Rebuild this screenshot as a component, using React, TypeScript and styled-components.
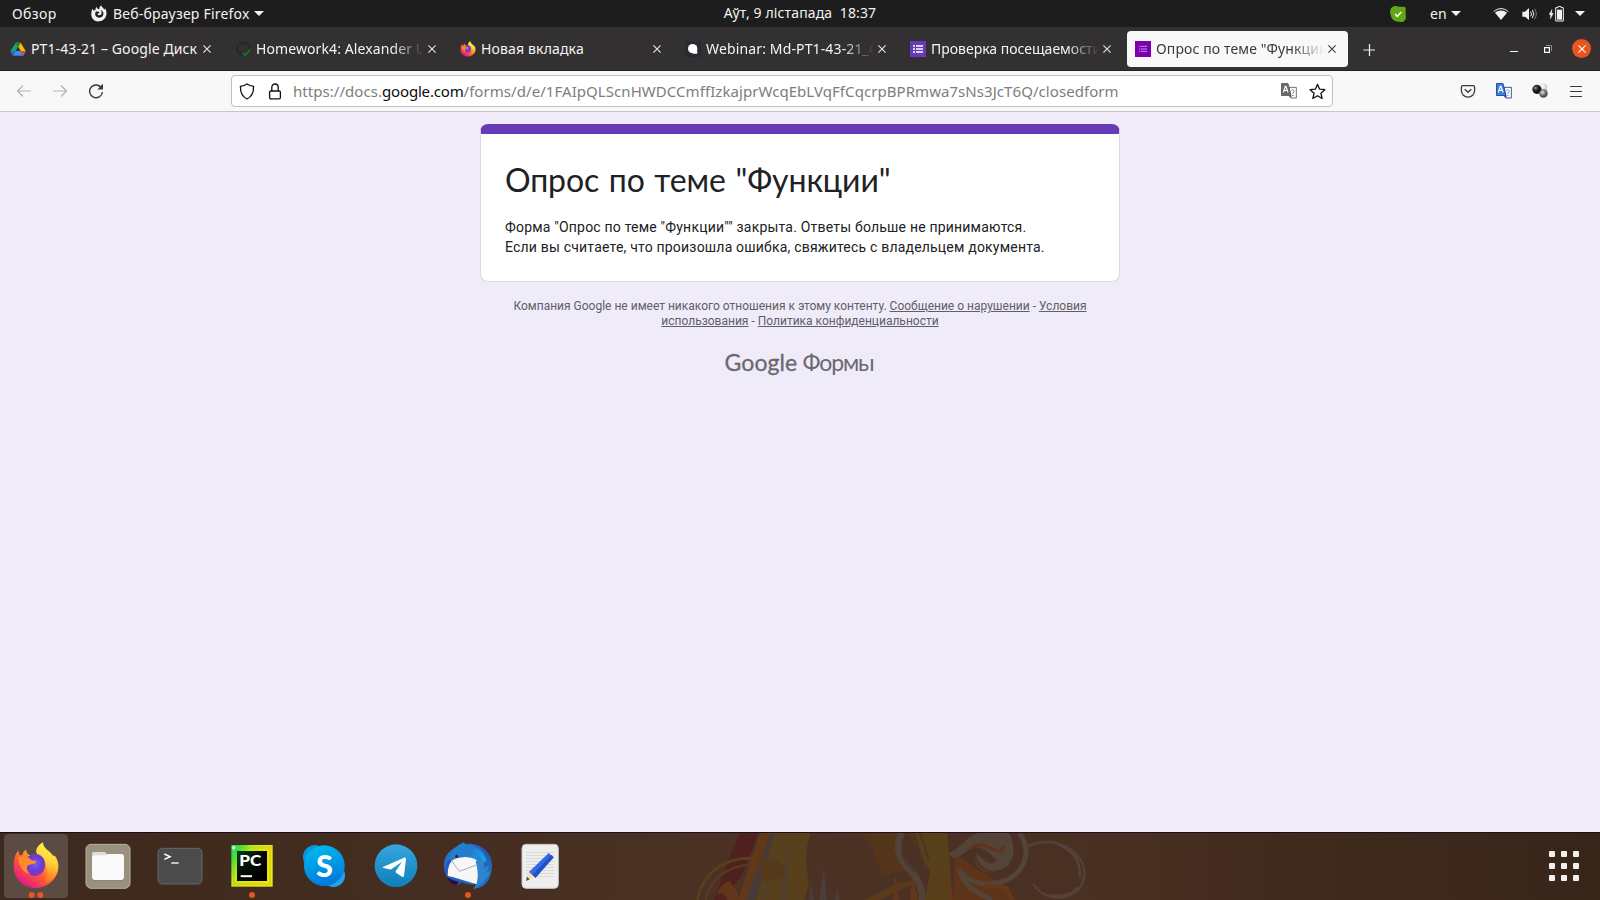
import React from 'react';
import styled, { createGlobalStyle } from 'styled-components';

const GlobalStyle = createGlobalStyle`
  * { box-sizing: border-box; }
  body { margin: 0; background: #efebf8; }
  svg { display: block; flex: none; }
`;

const uiFont = '"Noto Sans", "Open Sans", sans-serif';

const Desktop = styled.div`
  width: 1600px;
  height: 900px;
  display: flex;
  flex-direction: column;
  overflow: hidden;
  font-family: ${uiFont};
`;

/* ---------- system bar ---------- */

const SystemBar = styled.header`
  height: 27px;
  flex: none;
  display: grid;
  grid-template-columns: 1fr auto 1fr;
  align-items: center;
  background: #1d1d1d;
  color: #f2f2f2;
  font-size: 14px;
  line-height: 27px;
`;

const BarGroup = styled.div<{ $end?: boolean }>`
  display: flex;
  align-items: center;
  height: 27px;
  justify-content: ${(p) => (p.$end ? 'flex-end' : 'flex-start')};
  padding: ${(p) => (p.$end ? '0 15px 0 0' : '0 0 0 12px')};
`;

const BarLabel = styled.span<{ $track?: number; $width?: number }>`
  white-space: pre;
  letter-spacing: ${(p) => p.$track ?? 0}px;
  width: ${(p) => (p.$width ? `${p.$width}px` : 'auto')};
`;

const Gap = styled.span<{ $w: number }>`
  width: ${(p) => p.$w}px;
  flex: none;
`;

const Clock = styled(BarLabel)`
  height: 27px;
  line-height: 25px;
`;

/* ---------- tab strip ---------- */

const TabStrip = styled.nav`
  height: 44px;
  flex: none;
  display: flex;
  align-items: center;
  gap: 4px;
  padding: 0 9px 0 2px;
  background: #333031;
  border-bottom: 1px solid #211f20;
`;

const Tab = styled.div<{ $active?: boolean }>`
  width: 221px;
  height: 36px;
  display: flex;
  align-items: center;
  padding-left: 8px;
  border-radius: 4px;
  color: ${(p) => (p.$active ? '#3a3a3a' : '#f4f4f4')};
  background: ${(p) => (p.$active ? '#f8f8f8' : 'transparent')};
`;

const TabTitle = styled.span<{ $fade?: boolean; $track: number }>`
  width: 168px;
  margin-left: 5px;
  overflow: hidden;
  white-space: nowrap;
  font-size: 14px;
  line-height: 36px;
  padding-top: 1px;
  letter-spacing: ${(p) => p.$track}px;
  mask-image: ${(p) => (p.$fade ? 'linear-gradient(to left, transparent, #000 32px)' : 'none')};
`;

const TabClose = styled.span`
  width: 16px;
  display: flex;
  justify-content: center;
`;

const WindowControls = styled.div`
  margin-left: auto;
  display: flex;
  align-items: center;
`;

const CloseWindow = styled.span`
  width: 19px;
  height: 19px;
  border-radius: 50%;
  background: #e95420;
  display: grid;
  place-items: center;
`;

/* ---------- toolbar ---------- */

const Toolbar = styled.div`
  height: 41px;
  flex: none;
  display: flex;
  align-items: center;
  padding: 0 16px;
  background: #f8f8f8;
  border-bottom: 1px solid #c7c7c9;
`;

const NavButtons = styled.div`
  width: 215px;
  display: flex;
  align-items: center;
  gap: 20px;
`;

const AddressField = styled.div`
  width: 1102px;
  height: 32px;
  display: flex;
  align-items: center;
  gap: 12px;
  padding: 0 6px 0 7px;
  background: #fff;
  border: 1px solid #bfbfc1;
  border-radius: 4px;
`;

const Url = styled.span`
  flex: 1;
  display: flex;
  margin-left: -2px;
  font-size: 15px;
  line-height: 30px;
  color: #7d7d7d;
  white-space: nowrap;
`;

const UrlPart = styled.span<{ $strong?: boolean; $track: number }>`
  color: ${(p) => (p.$strong ? '#0c0c0d' : 'inherit')};
  letter-spacing: ${(p) => p.$track}px;
`;

const ToolbarActions = styled.div`
  margin-left: auto;
  display: flex;
  align-items: center;
  gap: 20px;
`;

/* ---------- page ---------- */

const Page = styled.main`
  flex: 1;
  display: flex;
  flex-direction: column;
  align-items: center;
  padding-top: 12px;
  background: #efebf8;
  font-family: Roboto, sans-serif;
`;

const FormCard = styled.section`
  width: 640px;
  height: 158px;
  border: 1px solid #dadce0;
  border-top: 10px solid #673ab7;
  border-radius: 8px;
  background: #fff;
  padding: 26px 24px 0;
  background-clip: padding-box;
`;

const FormTitle = styled.h1`
  margin: 0;
  font: 400 32px/40px Lato, sans-serif;
  letter-spacing: -0.1px;
  word-spacing: 1.5px;
  color: #202124;
`;

const FormText = styled.p`
  margin: 17px 0 0;
  font-size: 14px;
  line-height: 20px;
  letter-spacing: 0.2px;
  color: #202124;
`;

const Disclaimer = styled.p`
  width: 592px;
  margin: 17px 0 0;
  text-align: center;
  font-size: 12px;
  line-height: 15px;
  color: #615e66;
`;

const PolicyLink = styled.a`
  color: inherit;
  text-decoration: underline;
`;

const Brand = styled.div`
  margin-top: 17px;
  display: flex;
  gap: 5px;
  font: 400 23px/32px Lato, sans-serif;
  color: #6b6870;
`;

const BrandWord = styled.span<{ $w: number; $track: number; $bold?: boolean }>`
  width: ${(p) => p.$w}px;
  letter-spacing: ${(p) => p.$track}px;
  -webkit-text-stroke: ${(p) => (p.$bold ? '0.3px' : '0')} currentColor;
`;

/* ---------- dock ---------- */

const Dock = styled.footer`
  position: relative;
  height: 68px;
  flex: none;
  display: flex;
  align-items: center;
  gap: 8px;
  padding: 0 21px 1px 4px;
  border-top: 1px solid #1b1019;
  background: linear-gradient(90deg, #3e291e 0, #452e21 30%, #4b3224 47%, #4a3023 68%, #3f2a1d 82%, #38251a 100%);
`;

const Wallpaper = styled.svg`
  position: absolute;
  left: 680px;
  top: 0;
  opacity: 0.9;
`;

const DockItem = styled.div<{ $active?: boolean }>`
  position: relative;
  width: 64px;
  height: 64px;
  border-radius: 4px;
  background: ${(p) => (p.$active ? '#5c4b42' : 'transparent')};
`;

const AppGrid = styled.div`
  position: relative;
  margin-left: auto;
  display: grid;
  grid-template-columns: repeat(3, 6px);
  grid-auto-rows: 6px;
  gap: 6px;
`;

const GridDot = styled.i`
  background: #f1f0ee;
  border-radius: 1px;
`;

/* ---------- small icons ---------- */

const Caret = ({ w = 10 }: { w?: number }) => (
  <svg width={w} height="5" viewBox="0 0 10 5" preserveAspectRatio="none"><path d="M0 0h10L5 5z" fill="#f2f2f2" /></svg>
);

const Cross = ({ color = '#e6e6e6', size = 8 }: { color?: string; size?: number }) => (
  <svg width={size} height={size} viewBox="0 0 8 8"><path d="M.4.4l7.2 7.2M7.6.4L.4 7.6" stroke={color} strokeWidth="1.1" fill="none" /></svg>
);

const FirefoxMono = () => (
  <svg width="16" height="17" viewBox="0 0 48 51">
    <path d="M4 12c2-1 3 3 4 5l6-3c-1-5 1-7 3-8 0 4 3 6 8 7-1-5 2-9 6-12 0 6 7 8 9 13 2-1 2-3 2-4 9 13 5 38-18 39C3 51-4 29 4 12z" fill="#f2f2f2" />
    <path d="M14 20c5-1 8 0 12 2-1 4-5 2-7 5 2 6 12 5 13-2 1-5-2-8-4-10 9 2 12 11 7 18-6 8-18 6-22-2-1-4 0-8 1-11z" fill="#1d1d1d" />
  </svg>
);

const DriveIcon = () => (
  <svg width="16" height="16" viewBox="0 0 48 48">
    <path d="M17 5h15l15 25H32z" fill="#fbbc04" />
    <path d="M17 5L1 31l8 13 16-26z" fill="#1ea362" />
    <path d="M17 5h15l-7 13z" fill="#188038" />
    <path d="M16 30h31l-7 14H9z" fill="#4285f4" />
    <path d="M32 30h15l-7 14z" fill="#ea4335" />
    <path d="M1 31l8 13 8-14z" fill="#2468d6" />
    <path d="M24 18l7 12H17z" fill="#333031" />
  </svg>
);

const GithubCheck = () => (
  <svg width="16" height="16" viewBox="0 0 48 48">
    <path d="M46 20A22 22 0 1 0 19 45v-8c-5 1-8-1-10-5 4 2 8 3 11 0-9-1-12-8-9-16v-7l7 3c4-1 9-1 13 0l6-3 1 8c2 3 2 8 0 11z" fill="#222b30" />
    <path d="M24 36l7 7 14-17" stroke="#0f7b25" strokeWidth="4.5" fill="none" />
  </svg>
);

const WebinarIcon = () => (
  <svg width="16" height="16" viewBox="0 0 48 48">
    <rect width="48" height="48" fill="#262a33" />
    <circle cx="23" cy="23" r="14" fill="#fff" />
    <path d="M27 29h10v9H24z" fill="#fff" />
  </svg>
);

const FormsIcon = ({ bg, soft }: { bg: string; soft?: boolean }) => (
  <svg width="16" height="16" viewBox="0 0 48 48">
    <rect width="48" height="48" fill={bg} />
    {soft ? (
      <path d="M12 16h4m2 0h18M12 24h4m2 0h18M12 31h4m2 0h18" stroke="#c98be4" strokeWidth="3" />
    ) : (
      <path d="M9 15h6m3 0h21M9 24h6m3 0h21M9 33h6m3 0h21" stroke="#fff" strokeWidth="5" />
    )}
  </svg>
);

/* Shared by the dock launcher and the new-tab favicon */
const FirefoxShape = ({ id }: { id: string }) => (
  <>
    <defs>
      <linearGradient id={`${id}a`} x1=".85" y1=".05" x2=".2" y2=".95">
        <stop offset="0" stopColor="#fff44f" /><stop offset=".35" stopColor="#ffb02a" /><stop offset=".62" stopColor="#ff5a35" /><stop offset="1" stopColor="#e31587" />
      </linearGradient>
      <linearGradient id={`${id}b`} x1=".7" y1="0" x2=".5" y2="1">
        <stop offset="0" stopColor="#fff44f" /><stop offset=".45" stopColor="#ffd53a" /><stop offset=".8" stopColor="#ff8a25" /><stop offset="1" stopColor="#ff5a35" />
      </linearGradient>
      <radialGradient id={`${id}c`} cx=".5" cy=".45" r=".6">
        <stop offset="0" stopColor="#7a5cf5" /><stop offset=".6" stopColor="#6a3bd0" /><stop offset="1" stopColor="#9a2fae" />
      </radialGradient>
    </defs>
    <path d="M33 66c2-7 6-13 11-16l2 14 9-1c1-8 5-13 12-16-1 8 3 14 14 17l22-5c-2-14 4-25 14-34 0 20 22 25 31 42l5-2c7 10 12 23 10 37-3 35-34 60-68 60-38 0-66-29-66-63 0-12 1-22 4-33z" fill={`url(#${id}a)`} />
    <path d="M97 56c-2-13 6-22 19-31 0 20 19 24 29 42l4-3c14 23 15 53-4 72-12 12-28 16-42 15 22-8 31-28 26-46-2-17-14-30-32-49z" fill={`url(#${id}b)`} />
    <path d="M74 67c13-11 38-9 46 9 10 22-1 48-25 50-21 1-35-15-32-33 2-12 4-20 11-26z" fill={`url(#${id}c)`} />
    <path d="M42 70c18-3 32-3 40 9l16 2c-4 12-18 8-26 13-7 7-2 19 7 27-22-4-36-27-37-51z" fill="#ff8a2c" />
  </>
);

const FirefoxSmall = () => (
  <svg width="16" height="16" viewBox="24 22 144 144"><FirefoxShape id="fs" /></svg>
);

const Back = ({ flip }: { flip?: boolean }) => (
  <svg width="16" height="16" viewBox="0 0 16 16">
    <path d={flip ? 'M1 8h13.4M9 2.5L14.5 8 9 13.5' : 'M15 8H1.6M7 2.5L1.5 8 7 13.5'} fill="none" stroke="#b2b2b2" strokeWidth="1.2" />
  </svg>
);

const Reload = () => (
  <svg width="16" height="16" viewBox="0 0 16 16">
    <path d="M13.6 5.2A6.4 6.4 0 1 0 14.4 9" fill="none" stroke="#3a3a3a" strokeWidth="1.4" />
    <path d="M15 .8v5.7H9.3z" fill="#3a3a3a" />
  </svg>
);

const Shield = () => (
  <svg width="16" height="17" viewBox="0 0 16 17">
    <path d="M8 1c2 1.5 4 2 6.6 2.4.1 6-1.6 10-6.6 12.6C3 13.4 1.300 9.400 1.400 3.400 4 3 6 2.500 8 1z" fill="none" stroke="#111" strokeWidth="1.3" strokeLinejoin="round" />
  </svg>
);

const Lock = () => (
  <svg width="16" height="17" viewBox="0 0 16 17">
    <rect x="2.6" y="8" width="10.8" height="7.8" rx="1.3" fill="none" stroke="#111" strokeWidth="1.3" />
    <path d="M4.8 8V4.200a3.200 3.200 0 0 1 6.400 0V8" fill="none" stroke="#111" strokeWidth="1.3" />
  </svg>
);

const Translate = ({ color, edge, back }: { color: string; edge: string; back: string }) => (
  <svg width="16" height="16" viewBox="0 0 48 48">
    <path d="M24 13h22v32H30z" fill="#fff" stroke={edge} strokeWidth="2.5" />
    <path d="M31 22c5-3 9 0 8 4-1 3-4 4-4 7M33 38h5" stroke={back} strokeWidth="3" fill="none" />
    <path d="M1.5 1.5H21l9 36H1.5z" fill={color} stroke={edge} strokeWidth="2.5" />
    <path d="M23 38h8l-2 8z" fill={edge} />
    <path d="M7 28l6-18h2l6 18M9 22h10" stroke="#fff" strokeWidth="3.5" fill="none" />
  </svg>
);

const Star = () => (
  <svg width="17" height="17" viewBox="0 0 17 17">
    <path d="M8.5 1.3l2.1 4.9 5.3.5-4 3.5 1.2 5.3-4.6-2.8-4.6 2.8 1.2-5.3-4-3.5 5.3-.5z" fill="none" stroke="#111" strokeWidth="1.3" strokeLinejoin="round" />
  </svg>
);

const Pocket = () => (
  <svg width="16" height="16" viewBox="0 0 16 16">
    <path d="M3 2.600h10a1.600 1.600 0 0 1 1.600 1.600v3.300a6.600 6.600 0 0 1-13.200 0V4.200A1.600 1.600 0 0 1 3 2.600z" fill="none" stroke="#3a3a3a" strokeWidth="1.3" />
    <path d="M4.700 6.200L8 9.300l3.300-3.100" fill="none" stroke="#3a3a3a" strokeWidth="1.3" />
  </svg>
);

const Molecule = () => (
  <svg width="16" height="16" viewBox="0 0 49 48">
    <defs>
      <radialGradient id="mk" cx=".35" cy=".35"><stop offset="0" stopColor="#bbb" /><stop offset=".3" stopColor="#444" /><stop offset="1" stopColor="#0b0b0b" /></radialGradient>
      <radialGradient id="mg" cx=".4" cy=".35"><stop offset="0" stopColor="#e4e4e4" /><stop offset=".5" stopColor="#8f8f8f" /><stop offset="1" stopColor="#4f4f4f" /></radialGradient>
      <radialGradient id="mw" cx=".4" cy=".35"><stop offset="0" stopColor="#fff" /><stop offset="1" stopColor="#ccc" /></radialGradient>
    </defs>
    <circle cx="35" cy="13" r="12" fill="url(#mw)" />
    <circle cx="15" cy="19" r="14" fill="url(#mk)" />
    <circle cx="35" cy="32" r="13" fill="url(#mg)" />
  </svg>
);

const Menu = () => (
  <svg width="16" height="16" viewBox="0 0 16 16"><path d="M2 3.500h12M2 8.500h12M2 13.500h12" stroke="#3a3a3a" strokeWidth="1.2" /></svg>
);

const SkypeTray = () => (
  <svg width="16" height="16" viewBox="0 0 48 48">
    <path d="M12 1c8-2 9 1 15 1h15q5 0 5 5v18c0 5 2 8 0 13-3 9-11 12-19 9C12 48 3 39 2 25-2 15 1 4 12 1z" fill="#5fa716" />
    <path d="M15 24l7 7 12-13" stroke="#fff" strokeWidth="4.5" fill="none" />
  </svg>
);

const Wifi = () => (
  <svg width="16" height="14" viewBox="0 0 48 42">
    <path d="M2 14C15 2 33 2 46 14" fill="none" stroke="#f2f2f2" strokeWidth="3" />
    <path d="M6 17c10-9 26-9 36 0L24 39z" fill="#f2f2f2" />
  </svg>
);

const Volume = () => (
  <svg width="15" height="14" viewBox="0 0 45 42">
    <path d="M1 14h8L21 3v36L9 29H1z" fill="#f2f2f2" />
    <path d="M26 14q5 7 0 14M31 9q9 12 0 24" fill="none" stroke="#f2f2f2" strokeWidth="3" />
    <path d="M37 5q12 16 0 32" fill="none" stroke="#8b8b8b" strokeWidth="2.5" />
  </svg>
);

const Battery = () => (
  <svg width="15" height="16" viewBox="0 0 45 48">
    <path d="M9 10L0 26h5l-1 13 9-17H8z" fill="#f2f2f2" stroke="#f2f2f2" strokeWidth="1" />
    <path d="M20 5h7V1h9v4h7v40H20z" fill="none" stroke="#f2f2f2" strokeWidth="3" />
    <path d="M24 11h15v30H24z" fill="#f2f2f2" />
  </svg>
);

const Minimise = () => (
  <svg width="8" height="14" viewBox="0 0 8 14"><path d="M0 9.500h8" stroke="#f2f2f2" /></svg>
);

const Restore = () => (
  <svg width="8" height="8" viewBox="0 0 8 8">
    <path d="M2 .5h5.500V6" fill="none" stroke="#8d8b8c" />
    <path d="M.6 2.600h4.800v4.800H.6z" fill="none" stroke="#fff" strokeWidth="1.2" />
  </svg>
);

const Plus = () => (
  <svg width="12" height="14" viewBox="0 0 12 14"><path d="M6.500 2v12M.5 8h12" stroke="#f2f2f2" strokeWidth="1.2" /></svg>
);

/* ---------- dock icons ---------- */

const Launcher = ({ children, dots = 0, active }: { children: React.ReactNode; dots?: number; active?: boolean }) => (
  <DockItem $active={active}>
    <svg width="64" height="64" viewBox="0 0 192 192">
      {children}
      {dots === 1 && <circle cx="96" cy="183" r="9" fill="#e95420" />}
      {dots === 2 && <><circle cx="83" cy="183" r="9" fill="#e95420" /><circle cx="109" cy="183" r="9" fill="#e95420" /></>}
    </svg>
  </DockItem>
);

const FilesArt = () => (
  <>
    <rect x="30" y="31" width="132" height="132" rx="15" fill="#999080" stroke="#b9b1a2" strokeWidth="3" />
    <path d="M48 62q0-8 8-8h26q6 0 8 4l4 6h42q8 0 8 8v20H48z" fill="#e0dcd2" />
    <rect x="48" y="66" width="96" height="75" rx="8" fill="#7d7565" opacity=".4" />
    <path d="M48 72q0-9 9-9h31q4 0 7-3h41q8 0 8 9v60q0 9-9 9H57q-9 0-9-9z" fill="#fafafa" />
    <path d="M48 72v-10q0-8 8-8h26q6 0 8 4l4 4q-3 2-6 2H57q-8 0-9 8z" fill="#e0dcd2" />
  </>
);

const TerminalArt = () => (
  <>
    <rect x="30" y="43" width="132" height="107" rx="13" fill="#4b4b4b" stroke="#6a6764" strokeWidth="3" />
    <path d="M49 60l17 8-17 8" fill="none" stroke="#fff" strokeWidth="4.5" />
    <path d="M70 87h22" stroke="#fff" strokeWidth="4" />
  </>
);

const PyCharmArt = () => (
  <>
    <defs>
      <linearGradient id="pc" x1="0" y1="0" x2="1" y2=".6"><stop offset="0" stopColor="#21d789" /><stop offset=".15" stopColor="#1fe04a" /><stop offset=".4" stopColor="#c6e81d" /><stop offset=".75" stopColor="#f0e010" /><stop offset="1" stopColor="#e9e81a" /></linearGradient>
      <linearGradient id="pk" x1="0" y1="0" x2="1" y2="1"><stop offset="0" stopColor="#0a3a16" /><stop offset=".5" stopColor="#020803" /><stop offset="1" stopColor="#000" /></linearGradient>
    </defs>
    <rect x="34" y="33" width="124" height="125" fill="url(#pc)" />
    <rect x="42" y="41" width="108" height="109" fill="none" stroke="#b9c400" strokeOpacity=".35" strokeWidth="6" />
    <circle cx="41" cy="41" r="6" fill="#c9ffd9" opacity=".8" />
    <rect x="51" y="51" width="90" height="90" fill="url(#pk)" />
    <text x="58" y="96" textLength="66" lengthAdjust="spacingAndGlyphs" fontFamily="Lato, sans-serif" fontSize="46" fontWeight="900" fill="#fff">PC</text>
    <path d="M62 126.500h34" stroke="#fff" strokeWidth="6" />
  </>
);

const SkypeArt = () => (
  <>
    <defs>
      <linearGradient id="sk" x1=".3" y1="0" x2=".6" y2="1"><stop offset="0" stopColor="#00b9f0" /><stop offset="1" stopColor="#0078d8" /></linearGradient>
    </defs>
    <circle cx="69" cy="69" r="36" fill="#0a96dc" />
    <circle cx="124" cy="124" r="35" fill="#22a6e6" />
    <circle cx="97" cy="95" r="61" fill="url(#sk)" />
    <text x="97" y="128" textAnchor="middle" fontFamily="Lato, sans-serif" fontSize="92" fontWeight="900" fill="#fff">S</text>
  </>
);

const TelegramArt = () => (
  <>
    <defs>
      <linearGradient id="tg" x1="0" y1="0" x2="0" y2="1"><stop offset="0" stopColor="#35a6de" /><stop offset="1" stopColor="#0e7fbb" /></linearGradient>
    </defs>
    <circle cx="96" cy="95" r="64" fill="url(#tg)" />
    <path d="M57 99l63-28q6-2 6 4l-6 50q-1 6-6 3l-18-12q-3-3 0-6l18-27-31 22q-3 2-7 1l-17-4q-5-1-2-3z" fill="#fff" />
  </>
);

const ThunderbirdArt = () => (
  <>
    <defs>
      <linearGradient id="tb" x1="0" y1="0" x2="1" y2="1"><stop offset="0" stopColor="#2a7fd6" /><stop offset=".5" stopColor="#2359bb" /><stop offset="1" stopColor="#2277bd" /></linearGradient>
      <linearGradient id="th" x1="0" y1="0" x2="1" y2=".6"><stop offset="0" stopColor="#1e86c9" /><stop offset=".6" stopColor="#257bd0" /><stop offset="1" stopColor="#1b9fe0" /></linearGradient>
    </defs>
    <path d="M96 29c38-2 72 26 72 66 0 28-12 50-30 63l-28 8 10-12-26-4-32 4-8-7-10-5c-14-14-20-28-20-47 0-37 32-64 72-66z" fill="url(#tb)" />
    <path d="M33 128c10 8 22 12 36 15l-7 11C47 150 38 142 33 128z" fill="#251052" />
    <path d="M60 160l16-15 30 10 16-8-14 18z" fill="#452e21" />
    <path d="M58 72q30-6 62 0l14 22-2 42-10 15-72-22q-10-2-15-4-1-23 6-37z" fill="#f7f7f8" />
    <path d="M45 75q6 14 26 37l50-19" fill="none" stroke="#a9a9ad" strokeWidth="3" />
    <path d="M40 76c6-25 22-44 46-52-3 7 3 7 10 9 30 2 50 20 56 48l-22 10c-4-16-30-27-63-20-10 4-18 7-27 5z" fill="url(#th)" />
    <path d="M119 83c8-4 6-14 0-20 20 8 28 20 26 40l14-10-6 22 10-5c-8 24-24 40-48 54 14-24 12-54 4-81z" fill="#2b86cf" />
    <circle cx="62" cy="67" r="4.5" fill="#3a1d1a" />
    <path d="M40 76l12 4-8 6z" fill="#d9d9de" />
    <path d="M28 112c0-20 4-30 14-38l6 6c-10 10-12 26-14 44z" fill="#2a56c2" />
  </>
);

const EditorArt = () => (
  <>
    <rect x="42" y="31" width="109" height="132" rx="12" fill="#eeeeee" stroke="#c9c7c4" strokeWidth="3" />
    <path d="M54 55.500h84M54 64.500h84M54 73.500h84M54 82.500h84M54 91.500h84M54 100.500h84M54 109.500h84M54 118.500h84M54 127.500h84" stroke="#cfcfcf" strokeWidth="2" />
    <path d="M122 57l15 13-55 62-20-17z" fill="#3468e4" />
    <path d="M130 63l7 7-55 62-9-8z" fill="#2450c4" />
    <path d="M62 113l20 18-27 9z" fill="#f9dcbd" />
    <path d="M57 128l8 8-11 5z" fill="#43474d" />
  </>
);

const WallpaperArt = () => (
  <Wallpaper width="430" height="67" viewBox="0 24 1290 201" preserveAspectRatio="none">
    <path d="M178 24h58l-52 130-60 71h-22l45-125z" fill="#50201e" />
    <path d="M240 24h38L212 225h-38z" fill="#653819" />
    <path d="M272 24h16L228 225h-32z" fill="#483b37" />
    <path d="M286 24h106c-20 60-14 100-6 150l-12 51H228z" fill="#5a421d" />
    <path d="M330 80l-10 145h-18l4-90zM270 130l-16 95h-10z" fill="#53402f" />
    <path d="M52 225c18-86 90-134 180-124" fill="none" stroke="#5c3f1c" strokeWidth="9" />
    <path d="M76 225c16-60 60-100 130-106" fill="none" stroke="#5d3d20" strokeWidth="6" />
    <path d="M232 100c60-4 86 22 84 42s-40 28-64 26z" fill="#58391b" />
    <path d="M112 225c-2-36 14-48 40-58 4 22 26 30 24 58z" fill="#653719" />
    <path d="M108 225c0-24 26-28 34 0z" fill="#54211d" />
    <path d="M388 225l2-60 12 60zM418 225l14-100 8 100zM466 225l4-35 8 35z" fill="#48403d" />
    <path d="M540 24h114c-2 40 10 74 42 116l-90 9c-20-40-16-90-66-125z" fill="#56361a" />
    <path d="M556 225c50-30 100-58 150-60l6 12c-50 10-80 30-110 48z" fill="#5b3b18" />
    <path d="M638 225l8-75 12 75zM690 225l5-80 20 80z" fill="#65371c" />
    <path d="M664 24c-22 50-4 80 31 116 18 20 32 44 32 85" fill="none" stroke="#54443b" strokeWidth="20" />
    <path d="M672 44c-16 50 4 70 30 96" fill="none" stroke="#4b3427" strokeWidth="4" />
    <path d="M690 24h112l16 201h-84l16-85z" fill="#594219" />
    <path d="M700 24l38 110M720 24l26 80" stroke="#4a3525" strokeWidth="6" fill="none" />
    <path d="M824 80l60 50 90 50 34 45H820z" fill="#613519" />
    <path d="M806 84c40-14 60-60 90-60h90c26 40 18 104-30 112-52 8-68-34-66-54 30 40 50 38 60 24-30-34-60-46-78-36-16 10-34 28-54 30z" fill="#54463c" />
    <path d="M872 72c24-26 54-6 76 4 14 6 20 0 22-14" fill="none" stroke="#60341b" strokeWidth="9" />
    <path d="M892 88c-14 40 24 60 56 48" fill="none" stroke="#5e3820" strokeWidth="7" />
    <path d="M1018 24c46 60 10 142-80 152-50 4-80-12-100-44 10 52 50 70 98 93" fill="none" stroke="#54463c" strokeWidth="15" />
    <path d="M910 182l70 6 16 37M790 150l26 75" fill="none" stroke="#6b3819" strokeWidth="10" />
    <path d="M1044 64c60-28 126-8 156 38 28 46 10 104-52 116-40 4-72-14-88-42" fill="none" stroke="#52433a" strokeWidth="7" />
    <path d="M1130 56c50 20 72 50 70 102M1112 210c26 6 60 2 84-24" fill="none" stroke="#55463d" strokeWidth="7" />
  </Wallpaper>
);

type TabInfo = { title: string; icon: React.ReactNode; track: number; fade?: boolean; active?: boolean };

const tabs: TabInfo[] = [
  { title: 'PT1-43-21 – Google Диск', icon: <DriveIcon />, track: 0.1 },
  { title: 'Homework4: Alexander U', icon: <GithubCheck />, track: 0.1, fade: true },
  { title: 'Новая вкладка', icon: <FirefoxSmall />, track: 0.15 },
  { title: 'Webinar: Md-PT1-43-21_G', icon: <WebinarIcon />, track: 0.14, fade: true },
  { title: 'Проверка посещаемости', icon: <FormsIcon bg="#673ab7" />, track: 0, fade: true },
  { title: 'Опрос по теме "Функции"', icon: <FormsIcon bg="#7b00b0" soft />, track: 0.12, fade: true, active: true },
];

export default function App() {
  return (
    <Desktop>
      <GlobalStyle />
      <SystemBar>
        <BarGroup>
          <BarLabel $track={0.4} $width={79}>Обзор</BarLabel>
          <FirefoxMono />
          <Gap $w={6} />
          <BarLabel $track={0.2} $width={141}>Веб-браузер Firefox</BarLabel>
          <Caret />
        </BarGroup>
        <Clock $track={0.13}>{'Аўт, 9 лістапада  18:37'}</Clock>
        <BarGroup $end>
          <SkypeTray />
          <Gap $w={24} />
          <BarLabel $width={21}>en</BarLabel>
          <Caret />
          <Gap $w={32} />
          <Wifi />
          <Gap $w={13} />
          <Volume />
          <Gap $w={12} />
          <Battery />
          <Gap $w={11} />
          <Caret />
        </BarGroup>
      </SystemBar>

      <TabStrip>
        {tabs.map((t) => (
          <Tab key={t.title} $active={t.active}>
            {t.icon}
            <TabTitle $fade={t.fade} $track={t.track}>{t.title}</TabTitle>
            <TabClose><Cross color={t.active ? '#3a3a3a' : '#e6e6e6'} /></TabClose>
          </Tab>
        ))}
        <Gap $w={7} />
        <Plus />
        <WindowControls>
          <Minimise />
          <Gap $w={26} />
          <Restore />
          <Gap $w={20} />
          <CloseWindow><Cross color="#fff" /></CloseWindow>
        </WindowControls>
      </TabStrip>

      <Toolbar>
        <NavButtons><Back /><Back flip /><Reload /></NavButtons>
        <AddressField>
          <Shield />
          <Lock />
          <Url>
            <UrlPart $track={0.05}>https://docs.</UrlPart>
            <UrlPart $strong $track={-0.18}>google.com</UrlPart>
            <UrlPart $track={0.06}>/forms/d/e/1FAIpQLScnHWDCCmffIzkajprWcqEbLVqFfCqcrpBPRmwa7sNs3JcT6Q/closedform</UrlPart>
          </Url>
          <Translate color="#6b6b6b" edge="#555" back="#777" />
          <Star />
        </AddressField>
        <ToolbarActions>
          <Pocket />
          <Translate color="#3f7fe8" edge="#1d3a78" back="#5b93ee" />
          <Molecule />
          <Menu />
        </ToolbarActions>
      </Toolbar>

      <Page>
        <FormCard>
          <FormTitle>Опрос по теме "Функции"</FormTitle>
          <FormText>
            Форма "Опрос по теме "Функции"" закрыта. Ответы больше не принимаются.
            <br />
            Если вы считаете, что произошла ошибка, свяжитесь с владельцем документа.
          </FormText>
        </FormCard>
        <Disclaimer>
          Компания Google не имеет никакого отношения к этому контенту. <PolicyLink>Сообщение о нарушении</PolicyLink> - <PolicyLink>Условия использования</PolicyLink> - <PolicyLink>Политика конфиденциальности</PolicyLink>
        </Disclaimer>
        <Brand>
          <BrandWord $w={73} $track={0.1} $bold>Google</BrandWord>
          <BrandWord $w={73} $track={-1.1}>Формы</BrandWord>
        </Brand>
      </Page>

      <Dock>
        <WallpaperArt />
        <Launcher active dots={2}><FirefoxShape id="fx" /></Launcher>
        <Launcher><FilesArt /></Launcher>
        <Launcher><TerminalArt /></Launcher>
        <Launcher dots={1}><PyCharmArt /></Launcher>
        <Launcher><SkypeArt /></Launcher>
        <Launcher><TelegramArt /></Launcher>
        <Launcher dots={1}><ThunderbirdArt /></Launcher>
        <Launcher><EditorArt /></Launcher>
        <AppGrid>{Array.from({ length: 9 }, (_, i) => <GridDot key={i} />)}</AppGrid>
      </Dock>
    </Desktop>
  );
}
